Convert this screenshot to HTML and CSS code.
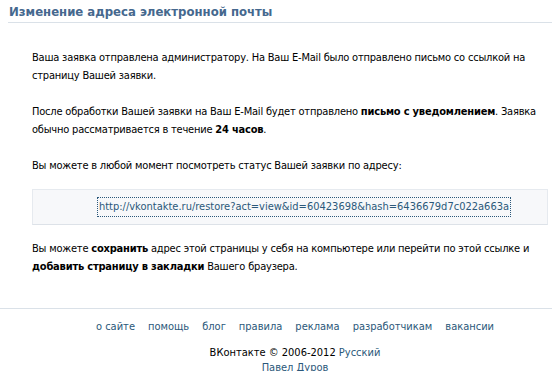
FILE: index.html
```html
<!DOCTYPE html>
<html lang="ru">
  <head>
    <meta charset="UTF-8" />
    <title>Изменение адреса электронной почты</title>
    <link rel="stylesheet" href="styles.css">
  </head>
  <body>
    <div class="page">
      <h2 class="page-title">Изменение адреса электронной почты</h2>

      <div class="content">
        <p>
          Ваша заявка отправлена администратору. На Ваш E-Mail было отправлено
          письмо со ссылкой на страницу Вашей заявки.
        </p>
        <p>
          После обработки Вашей заявки на Ваш E-Mail будет отправлено
          <b>письмо с уведомлением</b>. Заявка обычно рассматривается в
          течение <b>24 часов</b>.
        </p>
        <p class="before-link">Вы можете в любой момент посмотреть статус Вашей заявки по адресу:</p>

        <div class="link-box">
          <a class="restore-link" href="#">http://vkontakte.ru/restore?act=view&amp;id=60423698&amp;hash=6436679d7c022a663a</a>
        </div>

        <p>
          Вы можете <b>сохранить</b> адрес этой страницы у себя на компьютере
          или перейти по этой ссылке и <b>добавить страницу в закладки</b>
          Вашего браузера.
        </p>
      </div>
    </div>

    <div class="footer">
      <div class="footer-nav">
        <a href="#">о сайте</a>
        <a href="#">помощь</a>
        <a href="#">блог</a>
        <a href="#">правила</a>
        <a href="#">реклама</a>
        <a href="#">разработчикам</a>
        <a href="#">вакансии</a>
      </div>
      <div class="copy">ВКонтакте © 2006-2012 <a href="#">Русский</a></div>
      <div class="author"><a href="#">Павел Дуров</a></div>
    </div>
  </body>
</html>
```

FILE: styles.css
```css
body {
  margin: 0;
  padding: 0;
  background-color: #fff;
  color: #000;
  font-family: "DejaVu Sans Condensed", "DejaVu Sans", sans-serif;
  font-size: 11px;
  line-height: 18px;
}

a {
  color: #2b587a;
  text-decoration: none;
}

.page-title {
  margin: 0 0 0 8px;
  padding: 4px 0 3px 1px;
  border-bottom: 1px solid #dae1e8;
  color: #45688e;
  font-size: 13px;
  font-weight: bold;
  line-height: 15px;
}

.content {
  padding: 26px 4px 0 32px;
  letter-spacing: -0.2px;
}

.content p {
  margin: 0 0 18px;
}

.content p.before-link {
  margin-bottom: 14px;
}

.link-box {
  display: flex;
  justify-content: center;
  margin-bottom: 15px;
  padding: 7px 0 7px 28px;
  background-color: #f7f8fa;
  border: 1px solid #e6eaef;
  border-bottom-color: #dde2e8;
}

.restore-link {
  border: 1px dotted #2b587a;
  padding: 0 1px;
  letter-spacing: 0;
}

.footer {
  margin-top: 32px;
  padding: 8px 0 0 38px;
  border-top: 1px solid #dae1e8;
  text-align: center;
}

.footer-nav {
  display: flex;
  justify-content: center;
  gap: 13px;
  line-height: 20px;
}

.copy {
  margin-top: 8px;
  line-height: 16px;
}

.author {
  line-height: 13px;
}
```
